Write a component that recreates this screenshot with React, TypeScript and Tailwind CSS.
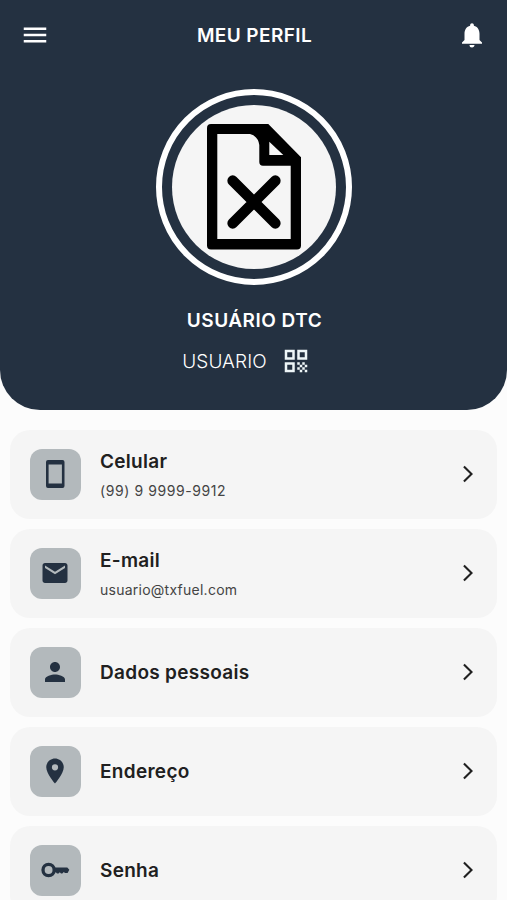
import React from "react";
import {
  MdArrowForwardIos,
  MdEmail,
  MdLocationOn,
  MdMenu,
  MdNotifications,
  MdPerson,
  MdQrCode,
} from "react-icons/md";

interface IconProps {
  size?: number;
  className?: string;
}

interface ProfileItem {
  title: string;
  subtitle?: string;
  icon: React.ComponentType<IconProps>;
}

const PhoneIcon: React.FC<IconProps> = ({ size = 30, className }) => (
  <svg width={size} height={size} viewBox="0 0 30 30" className={className}>
    <path
      fill="currentColor"
      fillRule="evenodd"
      d="M8 1H22.5Q24.5 1 24.5 3V27Q24.5 29 22.5 29H8Q6 29 6 27V3Q6 1 8 1ZM8.6 5.4V24.6H21.9V5.4Z"
    />
  </svg>
);

const KeyIcon: React.FC<IconProps> = ({ size = 30, className }) => (
  <svg width={size} height={size} viewBox="0 0 30 30" className={className}>
    <circle
      cx="8.6"
      cy="15"
      r="5.6"
      fill="none"
      stroke="currentColor"
      strokeWidth="3.3"
    />
    <path
      fill="currentColor"
      d="M14.5 12.5H27.3L29.3 14.7 27.6 18H25L23.8 17 22.3 18.6H21L19.8 17.3 18.5 18.6H17L15.8 17.3H14.5Z"
    />
  </svg>
);

const items: ProfileItem[] = [
  { title: "Celular", subtitle: "(99) 9 9999-9912", icon: PhoneIcon },
  { title: "E-mail", subtitle: "usuario@txfuel.com", icon: MdEmail },
  { title: "Dados pessoais", icon: MdPerson },
  { title: "Endereço", icon: MdLocationOn },
  { title: "Senha", icon: KeyIcon },
];

// Placeholder shown when the user has no photo
const MissingFile = () => (
  <svg width="94" height="126" viewBox="0 0 94 126" fill="#000">
    <path
      fillRule="evenodd"
      d="M4 0H61.3L94 33.3V121.5Q94 125.5 90 125.5H4Q0 125.5 0 121.5V4Q0 0 4 0ZM10.3 10V115H83.7V41.7H56Q52.3 41.7 52.3 38V21Q51 12 43 10ZM62.3 17.7V31H76.3Z"
    />
    <path
      d="M25.7 56.7L68.3 99.3M68.3 56.7L25.7 99.3"
      stroke="#000"
      strokeWidth="10.7"
      strokeLinecap="round"
    />
  </svg>
);

const ProfileCard: React.FC<{ item: ProfileItem }> = ({ item }) => {
  const Icon = item.icon;

  return (
    <button
      type="button"
      className="flex h-[89px] w-full shrink-0 items-center rounded-[20px] bg-[#f5f5f5] pr-[19px] pb-px pl-5 text-left"
    >
      <div className="flex size-[51px] items-center justify-center rounded-xl bg-[#b3b9bc] pr-px">
        <Icon className="text-[#243141]" size={30} />
      </div>
      <div
        className={`ml-[19px] flex flex-1 flex-col gap-[5px] ${
          item.subtitle ? "pt-1" : "pt-px"
        }`}
      >
        <p className="text-[19px] leading-6 font-semibold tracking-[0.3px] text-[#202020]">
          {item.title}
        </p>
        {item.subtitle && (
          <p
            className={`text-sm leading-6 text-[#444444] ${
              item.subtitle.includes("@")
                ? "tracking-[0.25px]"
                : "tracking-[0.58px]"
            }`}
          >
            {item.subtitle}
          </p>
        )}
      </div>
      <MdArrowForwardIos className="text-[#202020]" size={20} />
    </button>
  );
};

const App = () => {
  return (
    <div className="h-[900px] w-full overflow-hidden bg-[#fcfcfc] font-['Inter',sans-serif]">
      <header className="flex h-[410px] flex-col items-center rounded-b-[40px] bg-[#243141] text-white">
        <div className="flex w-full items-center justify-between px-5 pt-5">
          <MdMenu size={30} />
          <h1 className="pt-0.5 pl-0.5 text-[19px] leading-7 font-semibold tracking-[0.4px]">
            MEU PERFIL
          </h1>
          <MdNotifications size={30} />
        </div>
        <div className="mt-[39px] flex size-[196px] items-center justify-center rounded-full border-[6px] border-white">
          <div className="flex size-[164px] items-center justify-center rounded-full bg-[#f5f5f5]">
            <MissingFile />
          </div>
        </div>
        <h2 className="mt-6 pl-0.5 text-[19px] leading-6 font-semibold tracking-[0.5px]">
          USUÁRIO DTC
        </h2>
        <div className="mt-[13px] mr-3.5 flex items-center gap-[14px]">
          <span className="pt-0.5 text-[19px] leading-7 font-light tracking-[0.1px]">
            USUARIO
          </span>
          <MdQrCode className="text-[#eef6f8]" size={30} />
        </div>
      </header>
      <main className="flex flex-col gap-2.5 px-2.5 pt-5">
        {items.map((item) => (
          <ProfileCard key={item.title} item={item} />
        ))}
      </main>
    </div>
  );
};

export default App;
